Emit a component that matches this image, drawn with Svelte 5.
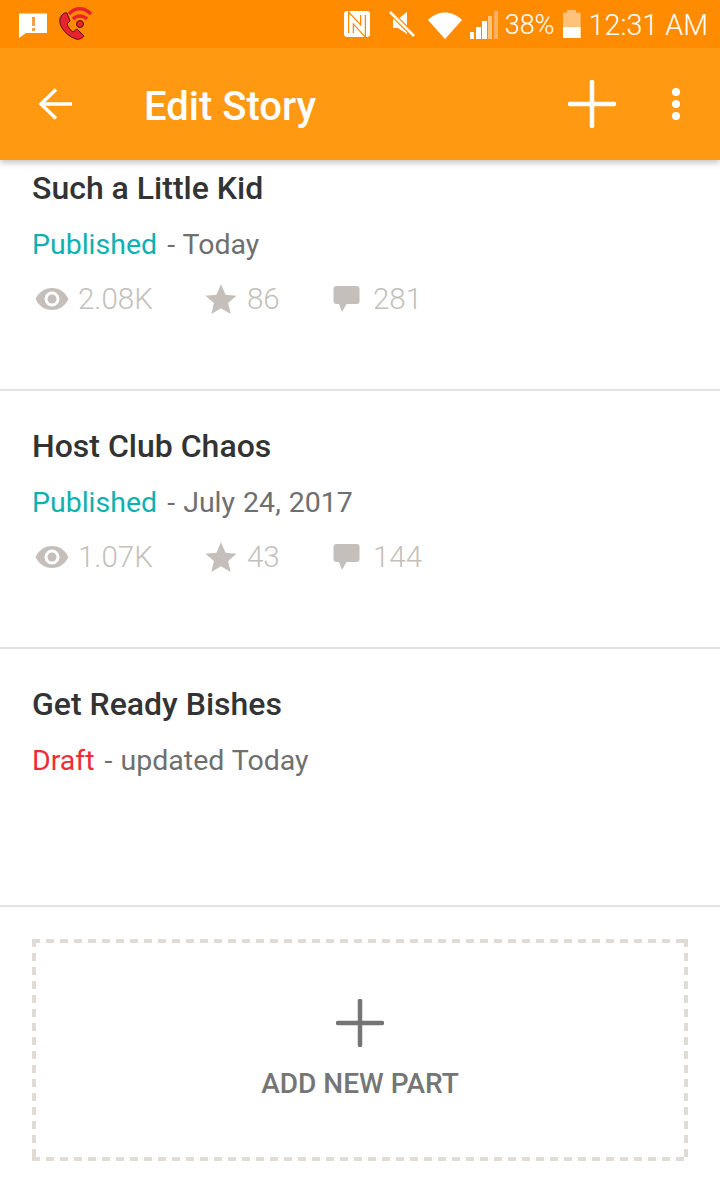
<script>
  const parts = [
    { title: "Such a Little Kid", status: "Published", kind: "published", date: "Today", views: "2.08K", votes: "86", comments: "281" },
    { title: "Host Club Chaos", status: "Published", kind: "published", date: "July 24, 2017", views: "1.07K", votes: "43", comments: "144" },
    { title: "Get Ready Bishes", status: "Draft", kind: "draft", date: "updated Today" }
  ];
</script>

<div class="page">
  <header class="appbar">
    <div class="statusbar">
      <div class="status-left">
        <svg width="32" height="28" viewBox="0 0 32 28">
          <path d="M3 3.500h28v19.500H10l-7 5z" fill="#fff"/>
          <rect x="16" y="7" width="3" height="9" fill="#f0a050"/>
          <rect x="16" y="18" width="3" height="3" fill="#f0a050"/>
        </svg>
        <svg class="call" width="36" height="34" viewBox="0 0 36 34">
          <path d="M5 8c-3 3-3 8 0 13 3 5 8 9 14 11 3 1 7-1 8-3l-7-7-4 3c-2-1-5-5-6-8l3-3-3-8c-2-1-4 1-5 2z" fill="#e8232f" stroke="#5a1010" stroke-width="1"/>
          <path d="M12 7c6-7 15-7 22 0M16 12c4-4 10-4 14 0" fill="none" stroke="#e8232f" stroke-width="3.500"/>
          <circle cx="23" cy="17" r="3.500" fill="#e8232f" stroke="#5a1010" stroke-width="1"/>
        </svg>
      </div>
      <div class="status-right">
        <svg class="nfc" width="26" height="26" viewBox="0 0 26 26">
          <rect width="26" height="26" rx="3" fill="#fff"/>
          <path d="M7 22V7l12 13V4" fill="none" stroke="#ff8c00" stroke-width="6"/>
          <path d="M7 26V7l12 13V0" fill="none" stroke="#fff" stroke-width="3.500"/>
        </svg>
        <svg class="mute" width="26" height="26" viewBox="0 0 26 26">
          <path d="M4 8h5l9-7v22l-9-6H4z" fill="#fff"/>
          <path d="M2 2l23 23" stroke="#ff8c00" stroke-width="5"/>
          <path d="M1 1l24 24" stroke="#fff" stroke-width="2.500"/>
        </svg>
        <svg class="wifi" width="34" height="27" viewBox="0 0 34 27">
          <path d="M0 8C10-2 24-2 34 8L17 27z" fill="#fff"/>
        </svg>
        <svg class="signal" width="29" height="28" viewBox="0 0 29 28">
          <rect x="0" y="21" width="4" height="7" fill="#fff"/>
          <rect x="6" y="16" width="5" height="12" fill="#fff"/>
          <rect x="12" y="10" width="5" height="18" fill="#fff"/>
          <rect x="18" y="5" width="4" height="23" fill="#ffc27a"/>
          <rect x="24" y="0" width="4" height="28" fill="#ffb060"/>
        </svg>
        <span class="percent">38%</span>
        <div class="battery"><span></span></div>
        <span class="clock">12:31 AM</span>
      </div>
    </div>
    <div class="toolbar">
      <svg class="back" width="34" height="32" viewBox="0 0 34 32">
        <path d="M33 16H3M17 1.500L2 16l15 14.500" fill="none" stroke="#fff" stroke-width="3.500"/>
      </svg>
      <h1>Edit Story</h1>
      <svg class="plus" width="48" height="48" viewBox="0 0 48 48">
        <path d="M2 24h44M24 2v44" stroke="#fff" stroke-width="4.500" stroke-linecap="round"/>
      </svg>
      <div class="dots"><i></i><i></i><i></i></div>
    </div>
  </header>

  <main class="list">
    {#each parts as part}
      <section class="row">
        <h2>{part.title}</h2>
        <p class="meta"><span class={part.kind}>{part.status}</span> - {part.date}</p>
        {#if part.views}
          <div class="stats">
            <div class="stat views">
              <svg width="34" height="24" viewBox="0 0 34 24">
                <path fill-rule="evenodd" d="M17 1C9.500 1 3.500 5.500 0.500 12c3 6.500 9 11 16.500 11s13.500-4.500 16.500-11C30.500 5.500 24.500 1 17 1zm0 3.500a7.500 7.500 0 1 1 0 15 7.500 7.500 0 0 1 0-15z" fill="#c4bfbb"/>
                <circle cx="17" cy="12" r="4.500" fill="#c4bfbb"/>
              </svg>
              <span>{part.views}</span>
            </div>
            <div class="stat votes">
              <svg width="32" height="30" viewBox="0 0 32 30">
                <path d="M16 0l4.500 10.800 11 .9-8.400 7.300 2.600 11L16 24.200 6.300 30l2.600-11L.5 11.700l11-.9z" fill="#c4bfbb"/>
              </svg>
              <span>{part.votes}</span>
            </div>
            <div class="stat comments">
              <svg width="28" height="28" viewBox="0 0 28 28">
                <path d="M3.500 1h20a3 3 0 0 1 3 3v12a3 3 0 0 1-3 3H13.500L9 27 6 19H3.500a3 3 0 0 1-3-3V4a3 3 0 0 1 3-3z" fill="#c4bfbb"/>
              </svg>
              <span>{part.comments}</span>
            </div>
          </div>
        {/if}
      </section>
    {/each}
  </main>

  <div class="add-wrap">
    <button class="add" type="button">
      <svg width="48" height="48" viewBox="0 0 48 48">
        <path d="M2 24h44M24 2v44" stroke="#757575" stroke-width="4.500" stroke-linecap="round"/>
      </svg>
      <span>ADD NEW PART</span>
    </button>
  </div>
</div>

<style>
  :global(body) {
    margin: 0;
    background: #fff;
  }

  .page {
    width: 720px;
    height: 1193px;
    overflow: hidden;
    font-family: Roboto, "Liberation Sans", sans-serif;
  }

  .appbar {
    position: relative;
    z-index: 2;
    box-shadow: 0 2px 7px rgba(0, 0, 0, 0.28);
  }

  .statusbar {
    height: 48px;
    background: #ff8c00;
    color: #fff;
    display: flex;
    justify-content: space-between;
    align-items: center;
    padding: 0 12px 0 16px;
  }

  .status-left,
  .status-right {
    display: flex;
    align-items: center;
  }

  .call {
    margin-left: 9px;
  }

  .mute {
    margin-left: 19px;
  }

  .wifi {
    margin-left: 13px;
    margin-top: 2px;
  }

  .signal {
    margin-left: 8px;
    margin-top: 2px;
  }

  .percent,
  .clock {
    font-size: 27px;
    font-weight: 300;
    padding-top: 2px;
  }

  .percent {
    margin-left: 6px;
  }

  .clock {
    font-size: 28.700px;
    margin-left: 8px;
  }

  .battery {
    width: 18px;
    height: 28px;
    margin-left: 8px;
    background: #ffc27a;
    clip-path: polygon(0 10%, 25% 10%, 25% 0, 75% 0, 75% 10%, 100% 10%, 100% 100%, 0 100%);
    display: flex;
    align-items: flex-end;
  }

  .battery span {
    display: block;
    width: 100%;
    height: 11px;
    background: #fff;
  }

  .toolbar {
    height: 112px;
    background: #ff9912;
    display: flex;
    align-items: center;
    padding-left: 39px;
  }

  .toolbar h1 {
    margin: 4px 0 0 71px;
    flex: 1;
    color: #fff;
    font-size: 40px;
    font-weight: 500;
  }

  .plus {
    margin-right: 56px;
  }

  .dots {
    display: flex;
    flex-direction: column;
    gap: 4px;
    margin-right: 40px;
  }

  .dots i {
    width: 8px;
    height: 8px;
    border-radius: 50%;
    background: #fff;
  }

  .list {
    margin-top: -27px;
  }

  .row {
    height: 258px;
    box-sizing: border-box;
    border-bottom: 2px solid #e3e3e3;
    padding: 35px 32px 0;
  }

  .row h2 {
    margin: 0;
    font-size: 32px;
    line-height: 40px;
    font-weight: 500;
    color: #333;
  }

  .meta {
    margin: 17px 0 0;
    font-size: 28.500px;
    line-height: 40px;
    word-spacing: 1px;
    color: #6f6f6f;
  }

  .meta span {
    margin-right: 2px;
  }

  .published {
    color: #0fb0b0;
  }

  .draft {
    color: #ef2b36;
  }

  .stats {
    display: flex;
    align-items: center;
    margin-top: 14px;
    height: 40px;
    color: #c4bfbb;
    font-size: 29.500px;
    font-weight: 300;
  }

  .stat {
    display: flex;
    align-items: center;
  }

  .views {
    width: 170px;
    padding-left: 3px;
    gap: 9px;
  }

  .votes {
    width: 128px;
    gap: 10px;
  }

  .comments {
    gap: 12px;
  }

  .add-wrap {
    padding: 32px;
  }

  .add {
    width: 656px;
    height: 222px;
    padding: 0;
    margin: 0;
    border: 0;
    font-family: inherit;
    display: flex;
    flex-direction: column;
    align-items: center;
    background:
      linear-gradient(90deg, #e0dbd5 8px, transparent 8px) 0 0 / 14px 4px repeat-x,
      linear-gradient(90deg, #e0dbd5 8px, transparent 8px) 0 100% / 14px 4px repeat-x,
      linear-gradient(#e0dbd5 8px, transparent 8px) 0 0 / 4px 14px repeat-y,
      linear-gradient(#e0dbd5 8px, transparent 8px) 100% 0 / 4px 14px repeat-y,
      #fff;
  }

  .add svg {
    margin-top: 60px;
  }

  .add span {
    margin-top: 19px;
    font-size: 28px;
    line-height: 36px;
    font-weight: 500;
    color: #757575;
  }
</style>
